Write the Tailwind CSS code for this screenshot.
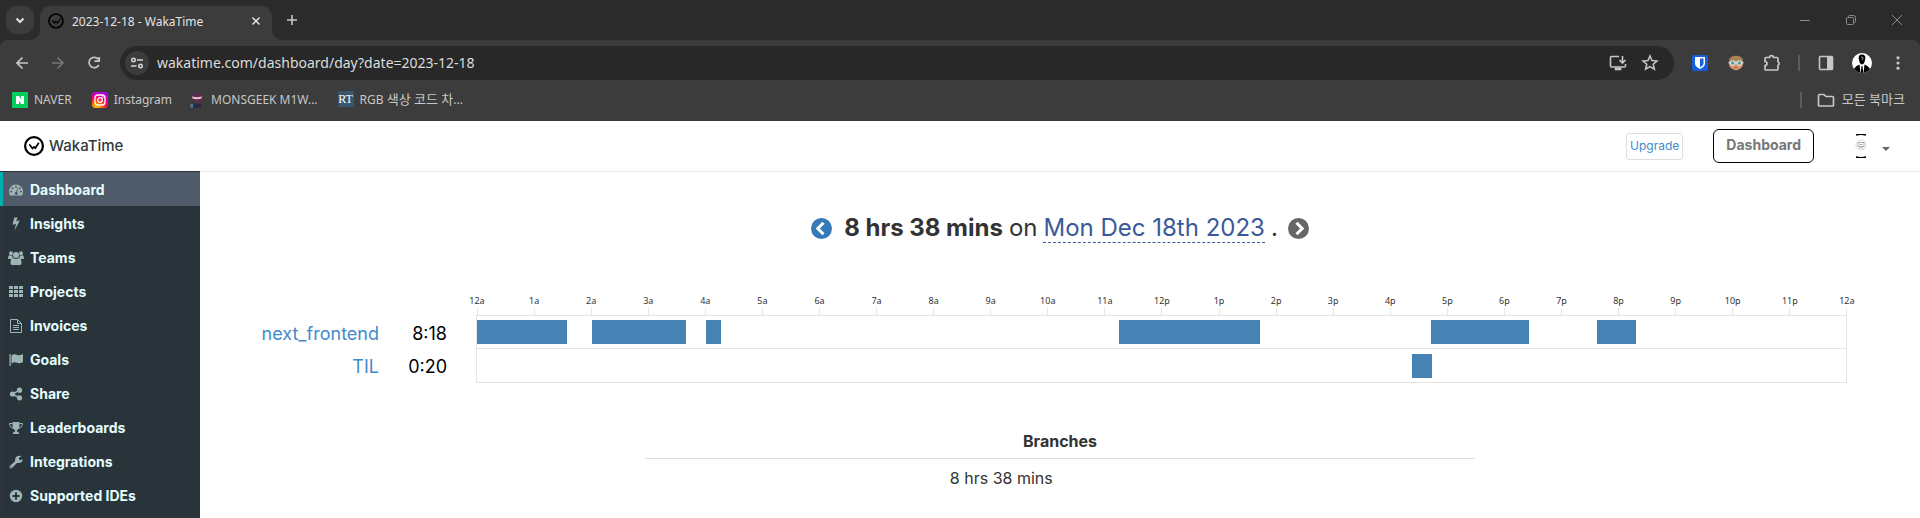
<!DOCTYPE html>
<html lang="en">
<head>
<meta charset="utf-8">
<title>2023-12-18 - WakaTime</title>
<script src="https://cdn.jsdelivr.net/npm/@tailwindcss/browser@4"></script>
</head>
<body class="flex h-screen flex-col overflow-hidden bg-white font-['Inter','Noto_Sans_CJK_KR',sans-serif] text-[#333]">

<!-- Browser window chrome -->
<div class="shrink-0 bg-[#2b2b2b] font-['Noto_Sans','Noto_Sans_CJK_KR',sans-serif] text-xs text-[#c7c7c7]">
  <div class="flex h-10 items-end pl-1.5">
    <button aria-label="Search tabs" class="mb-1.5 flex size-7 items-center justify-center rounded-[10px] bg-[#3c3c3c]">
      <svg class="size-4" viewBox="0 0 16 16" fill="none" stroke="#e3e3e3" stroke-width="2"><path d="M4.5 6.5 8 10l3.5-3.5"/></svg>
    </button>
    <svg class="ml-[-4px] size-2.5" viewBox="0 0 10 10"><path d="M10 0v10H0A10 10 0 0 0 10 0Z" fill="#3c3c3c"/></svg>
    <div class="flex h-[34px] w-[232px] items-center rounded-t-[10px] bg-[#3c3c3c] px-2 pb-1">
      <svg class="size-4" viewBox="0 0 16 16" fill="none" stroke="#000" stroke-width="1.700"><circle cx="8" cy="8" r="7"/><path d="m4.500 7.500 2 2.500L8 8.500 9.500 10l3-4.500" stroke-width="1.300"/></svg>
      <span class="ml-2 flex-1 whitespace-nowrap pt-0.5 text-[#e3e3e3]">2023-12-18 - WakaTime</span>
      <button aria-label="Close tab" class="flex size-4 items-center justify-center"><svg class="size-4" viewBox="0 0 16 16" stroke="#e3e3e3" stroke-width="1.500"><path d="m4.500 4.500 7 7m0-7-7 7"/></svg></button>
    </div>
    <svg class="size-2.5" viewBox="0 0 10 10"><path d="M0 0v10h10A10 10 0 0 1 0 0Z" fill="#3c3c3c"/></svg>
    <button aria-label="New tab" class="mb-3 ml-0.5 flex size-4 items-center justify-center"><svg class="size-4" viewBox="0 0 16 16" stroke="#c7c7c7" stroke-width="1.600"><path d="M8 3v10M3 8h10"/></svg></button>
    <div class="mb-3 ml-auto flex gap-[30px] pr-[15px]">
      <button aria-label="Minimize"><svg class="size-4" viewBox="0 0 16 16" stroke="#8a8a8a"><path d="M3 8.500h10"/></svg></button>
      <button aria-label="Restore"><svg class="size-4" viewBox="0 0 16 16" fill="none" stroke="#8a8a8a"><rect x="3.500" y="5.500" width="7" height="7" rx="1"/><path d="M5.500 5.500v-1q0-1 1-1h4q2 0 2 2v4q0 1-1 1h-1"/></svg></button>
      <button aria-label="Close"><svg class="size-4" viewBox="0 0 16 16" stroke="#8a8a8a"><path d="m3 3 10 10m0-10L3 13"/></svg></button>
    </div>
  </div>

  <div class="rounded-t-lg bg-[#3c3c3c]">
    <div class="flex h-[46px] items-center pl-3.5 pr-3.5">
      <div class="flex gap-4">
        <button aria-label="Back"><svg class="size-5" viewBox="0 0 20 20" fill="none" stroke="#c7c7c7" stroke-width="1.700"><path d="M14 10H3m5.500-5.500L3 10l5.500 5.500"/></svg></button>
        <button aria-label="Forward"><svg class="size-5" viewBox="0 0 20 20" fill="none" stroke="#757575" stroke-width="1.700"><path d="M2 10h11M7.500 4.500 13 10l-5.500 5.500"/></svg></button>
        <button aria-label="Reload"><svg class="size-5" viewBox="0 0 20 20" fill="none" stroke="#c7c7c7" stroke-width="1.700"><path d="M12.500 6.500A5.200 5.200 0 1 0 12.800 12"/><path d="M8.500 8.200h4.700V4"/></svg></button>
      </div>
      <div class="ml-[14px] flex h-[34px] flex-1 items-center rounded-full bg-[#282828] pl-[5px] pr-3.5">
        <button aria-label="View site information" class="flex size-6 items-center justify-center rounded-full bg-[#3c3c3c]">
          <svg class="size-4" viewBox="0 0 16 16" fill="none" stroke="#d5d5d5" stroke-width="1.600"><circle cx="4.500" cy="5" r="1.700"/><path d="M8 5h6M2 11h5.500"/><circle cx="11.500" cy="11" r="1.700"/></svg>
        </button>
        <input aria-label="Address" value="wakatime.com/dashboard/day?date=2023-12-18" class="ml-2 min-w-0 flex-1 bg-transparent text-sm text-[#dcdcdc] outline-none">
        <button aria-label="Install app"><svg class="size-5" viewBox="0 0 20 20" fill="none" stroke="#c7c7c7" stroke-width="1.600"><path d="M11 3.500H3.500q-1 0-1 1v8.500q0 1 1 1h13q1 0 1-1v-2M14.500 3v7m-3-3 3 3 3-3"/><path d="M7.500 15.500h5v1h-5z"/></svg></button>
        <button aria-label="Bookmark this tab" class="ml-3"><svg class="size-5" viewBox="0 0 20 20" fill="none" stroke="#c7c7c7" stroke-width="1.500"><path d="m10 3 2 4.600 5 .4-3.800 3.300 1.200 4.900-4.400-2.600-4.400 2.600 1.200-4.900L3 8l5-.4z"/></svg></button>
      </div>
      <div class="ml-[18px] flex items-center">
        <button aria-label="Bitwarden"><svg class="size-4" viewBox="0 0 16 16"><rect width="16" height="16" rx="2" fill="#175ddc"/><path d="M3 2h10v6.500q0 3-5 5.500-5-2.500-5-5.500z" fill="#fff"/><path d="M8 3.500h3.500v5q0 2-3.500 3.800z" fill="#175ddc"/></svg></button>
        <button aria-label="Face extension" class="ml-5"><svg class="size-4" viewBox="0 0 16 16"><circle cx="8" cy="8" r="7.200" fill="#d99a72"/><path d="M.8 7Q1 .8 8 .8T15.200 7Q8 4.500.8 7Z" fill="#a98452"/><path d="M.5 7h15v1.200H.5z" fill="#cfe0e2"/><circle cx="4.700" cy="8" r="2.200" fill="#4a98a6" stroke="#e8f0f0"/><circle cx="11.300" cy="8" r="2.200" fill="#4a98a6" stroke="#e8f0f0"/><path d="M6 13q2-1.500 4 0" stroke="#b5504a" fill="none"/></svg></button>
        <button aria-label="Extensions" class="ml-[18px]"><svg class="size-5" viewBox="0 0 20 20" fill="none" stroke="#c7c7c7" stroke-width="1.700"><path d="M4 4.500h3.500a2 1.800 0 0 1 4 0H15q1 0 1 1v3.200a1.600 1.900 0 0 1 0 3.600V16q0 1-1 1H4q-1 0-1-1v-3.500a2 2 0 0 0 0-4V5.500q0-1 1-1Z"/></svg></button>
        <span class="ml-4 h-4 w-0.5 bg-[#5c5c5c]"></span>
        <button aria-label="Side panel" class="ml-4"><svg class="size-5" viewBox="0 0 20 20"><rect x="3.500" y="3.500" width="13" height="13" rx="1" fill="none" stroke="#c7c7c7" stroke-width="1.600"/><path d="M11 3h5.500v14H11z" fill="#c7c7c7"/></svg></button>
        <button aria-label="Profile" class="ml-4"><svg class="size-5" viewBox="0 0 20 20"><clipPath id="p"><circle cx="10" cy="10" r="10"/></clipPath><g clip-path="url(#p)"><path d="M0 0h20v20H0z" fill="#fff"/><path d="M10 1.500c2.500 0 3.500 1.500 3.300 4L12.500 9q-1 2.500-2.500 2.500T7.500 9l-.8-3.500c-.2-2.500.8-4 3.300-4ZM1 20q0-6 6.500-8.500l1 8.500zm18 0q0-6-6.500-8.500l-1 8.500zM9.500 13h1l.8 7H8.700z" fill="#000"/><path d="M9 4.500q1.200-1 1.800 0T10 7" stroke="#ccc" stroke-width=".8" fill="none"/></g></svg></button>
        <button aria-label="Menu" class="ml-[18px]"><svg class="size-4" viewBox="0 0 16 16" fill="#c7c7c7"><circle cx="8" cy="2.800" r="1.600"/><circle cx="8" cy="8" r="1.600"/><circle cx="8" cy="13.200" r="1.600"/></svg></button>
      </div>
    </div>
    <div class="flex h-[35px] items-center pb-2 pl-3 pr-[15px]">
      <a href="#" class="flex items-center gap-1.5"><svg class="size-4" viewBox="0 0 16 16"><path d="M0 0h16v16H0z" fill="#03cf5d"/><path d="M4 4h3l2.200 3.500V4H12v8H9.200L7 8.500V12H4z" fill="#fff"/></svg>NAVER</a>
      <a href="#" class="ml-5 flex items-center gap-1.5"><svg class="size-4" viewBox="0 0 16 16" fill="none" stroke="#fff"><defs><radialGradient id="g" cx=".25" cy="1.050" r="1.150"><stop offset="0" stop-color="#ffd600"/><stop offset=".35" stop-color="#ff6a00"/><stop offset=".6" stop-color="#ff0069"/><stop offset="1" stop-color="#a800ff"/></radialGradient></defs><rect width="16" height="16" rx="3.500" fill="url(#g)" stroke="none"/><rect x="3" y="3" width="10" height="10" rx="3" stroke-width="1.300"/><circle cx="8" cy="8" r="2.300" stroke-width="1.300"/><circle cx="10.900" cy="5.100" r=".4"/></svg>Instagram</a>
      <a href="#" class="ml-[17px] flex items-center gap-1.5"><svg class="size-4" viewBox="0 0 16 16"><path d="M2.500 4Q3 1 8 1t5.500 3L12.500 9q-4 4-8 0z" fill="#5b2b52"/><path d="M3 4.500q5 1.600 10 0l-.6 2q-4.400 1.300-8.800 0z" fill="#f1c3c6"/><path d="M4.500 11q3.500 2 7 0l1 5H4z" fill="#2c2a38"/><path d="M1.500 12H4v3.500H1.500z" fill="#4979a8"/></svg>MONSGEEK M1W...</a>
      <a href="#" class="ml-5 flex items-center gap-1.5"><span class="flex size-4 items-center justify-center bg-[#35566e] font-['Liberation_Serif',serif] text-xs leading-4 text-white">RT</span><span>RGB <span class="text-[13px]">색상 코드 차</span>...</span></a>
      <span class="ml-auto h-4 w-0.5 bg-[#5c5c5c]"></span>
      <button class="ml-3.5 flex items-center gap-1.5 text-[13px]"><svg class="size-5" viewBox="0 0 20 20" fill="none" stroke="#c7c7c7" stroke-width="1.700"><path d="M3.500 4.500H8l2 2h6.500q1 0 1 1V15q0 1-1 1h-13q-1 0-1-1V5.500q0-1 1-1Z"/></svg>모든 북마크</button>
    </div>
  </div>
</div>

<!-- Site header -->
<header class="flex h-[51px] shrink-0 items-center border-b border-[#e7e7e7] pl-6 pr-[30px]">
  <a href="#" class="flex items-center gap-[5px] text-[15px] font-medium text-[#2f3a44]">
    <svg class="size-5" viewBox="0 0 20 20" fill="none" stroke="#000" stroke-linecap="round" stroke-linejoin="round"><circle cx="10" cy="10" r="8.900" stroke-width="2.200"/><path d="m5.800 9 2.700 3.500L10 10.800l1.200 1.500 3.300-5" stroke-width="1.700"/></svg>
    WakaTime
  </a>
  <button class="ml-auto h-[27px] rounded-[3px] border border-[#ddd] px-[3px] text-xs text-[#428bca]">Upgrade</button>
  <button class="ml-[30px] h-[34px] rounded-md border border-black px-3 pb-0.5 text-sm font-bold text-[#777]">Dashboard</button>
  <button aria-label="Account" class="ml-[38px] flex items-center gap-3">
    <svg class="h-6 w-[18px]" viewBox="0 0 18 24" fill="none"><path d="M4 1q5-1.500 10 0M4 23q5 1.500 10 0" stroke="#000" stroke-width="1.400"/><circle cx="9" cy="11" r="5" stroke="#ddd"/><path d="M6 8.500h6v4H6zM7.500 10.500h3M7 14h4" stroke="#999" stroke-width=".8"/></svg>
    <svg class="mt-1.5 h-1 w-2" viewBox="0 0 8 4" fill="#666"><path d="M0 0h8L4 4z"/></svg>
  </button>
</header>

<div class="flex min-h-0 flex-1">
  <!-- Sidebar -->
  <nav class="-mt-px w-[200px] shrink-0 bg-[#29343a] pt-px text-sm font-bold text-[#e4fdff]">
    <a href="#" class="flex h-[34px] items-center gap-1.5 border-l-[3px] border-[#00b0b0] bg-[#505b69] pl-[5px] pt-0.5"><svg class="size-4" viewBox="0 0 16 16"><path d="M8 2.500a7 7 0 0 0-7 7q0 2 1 4h12q1-2 1-4a7 7 0 0 0-7-7Z" fill="#9fb5b5"/><g fill="#505b69"><circle cx="8" cy="4.800" r="1"/><circle cx="4.600" cy="6.200" r="1"/><circle cx="3.200" cy="9.500" r="1"/><circle cx="12.800" cy="9.500" r="1"/><circle cx="11.600" cy="6.200" r="1"/><path d="m9.200 6 .8.200-.9 3.700a1.600 1.600 0 1 1-.8-.2z"/></g></svg>Dashboard</a>
    <a href="#" class="flex h-[34px] items-center gap-1.5 border-l-[3px] border-[#2c353d] pl-[5px] pt-0.5"><svg class="size-4" viewBox="0 0 16 16" fill="#9fb5b5"><path d="M6.300 1.500h3.300L8.200 5.300l3.600-.8L6.500 14.500 8 8l-3.500.8z"/></svg>Insights</a>
    <a href="#" class="flex h-[34px] items-center gap-1.5 border-l-[3px] border-[#2c353d] pl-[5px] pt-0.5"><svg class="size-4" viewBox="0 0 16 16" fill="#9fb5b5"><circle cx="3" cy="3.200" r="2"/><circle cx="13" cy="3.200" r="2"/><circle cx="8" cy="5" r="3"/><path d="M.2 9V7q.3-2 1.300-1.700 1.500.8 2.700 0Q4 7.500 5 8.200q-1.500.2-2 .8zM15.800 9V7q-.3-2-1.300-1.700-1.500.8-2.700 0 .2 2.200-.8 2.900 1.500.2 2 .8zM2.500 13q0-5 3-5 2.500 2 5 0 3 0 3 5 0 2-1.500 2H4q-1.500 0-1.500-2Z"/></svg>Teams</a>
    <a href="#" class="flex h-[34px] items-center gap-1.5 border-l-[3px] border-[#2c353d] pl-[5px] pt-0.5"><svg class="size-4" viewBox="0 0 16 16" fill="#9fb5b5"><path d="M1 2h4v3H1zm5 0h4v3H6zm5 0h4v3h-4zM1 6h4v3H1zm5 0h4v3H6zm5 0h4v3h-4zM1 10h4v3H1zm5 0h4v3H6zm5 0h4v3h-4z"/></svg>Projects</a>
    <a href="#" class="flex h-[34px] items-center gap-1.5 border-l-[3px] border-[#2c353d] pl-[5px] pt-0.5"><svg class="size-4" viewBox="0 0 16 16" fill="none" stroke="#9fb5b5"><path d="M2.500 1.500h7l4 4v9h-11zM9.500 1.500v4h4M5 7.500h6m-6 2h6m-6 2h6"/></svg>Invoices</a>
    <a href="#" class="flex h-[34px] items-center gap-1.5 border-l-[3px] border-[#2c353d] pl-[5px] pt-0.5"><svg class="size-4" viewBox="0 0 16 16" fill="#9fb5b5"><path d="M1.500 2h1.200v12H1.500zM3.500 3.500q3-2 5.500-.5 2.500 1 6-1v8q-3.500 2-6 .8-2.500-1.300-5.500.7z"/></svg>Goals</a>
    <a href="#" class="flex h-[34px] items-center gap-1.5 border-l-[3px] border-[#2c353d] pl-[5px] pt-0.5"><svg class="size-4" viewBox="0 0 16 16" fill="#9fb5b5"><circle cx="4.500" cy="8" r="2.600"/><circle cx="11.500" cy="4.200" r="2.600"/><circle cx="11.500" cy="11.800" r="2.600"/><path d="m11.500 4.200-7 3.800 7 3.800" fill="none" stroke="#9fb5b5" stroke-width="1.500"/></svg>Share</a>
    <a href="#" class="flex h-[34px] items-center gap-1.5 border-l-[3px] border-[#2c353d] pl-[5px] pt-0.5"><svg class="size-4" viewBox="0 0 16 16" fill="#9fb5b5"><path d="M4.500 2h7v3q0 4-2.500 5v1.500q2 .3 2.300 2.500H4.700Q5 11.800 7 11.500V10Q4.500 9 4.500 5z"/><path d="M4.500 3.500h-3q0 4 4.500 5M11.500 3.500h3q0 4-4.500 5" fill="none" stroke="#9fb5b5"/></svg>Leaderboards</a>
    <a href="#" class="flex h-[34px] items-center gap-1.5 border-l-[3px] border-[#2c353d] pl-[5px] pt-0.5"><svg class="size-4" viewBox="0 0 16 16" fill="#9fb5b5"><path d="M13.500 2.300 11 3.800v1.700l1.500.8 2-1.300q.3 3.800-3.800 4-.8 0-1.500-.3L4 14q-1.200 1-2.200 0t0-2L7.300 7Q6.500 5 8 3.200q2-2.200 5.500-.9ZM3 12.300a.6.600 0 1 0 .1 1.200.6.600 0 0 0-.1-1.200Z" fill-rule="evenodd"/></svg>Integrations</a>
    <a href="#" class="flex h-[34px] items-center gap-1.5 border-l-[3px] border-[#2c353d] pl-[5px] pt-0.5"><svg class="size-4" viewBox="0 0 16 16"><circle cx="8" cy="8" r="6.200" fill="#9fb5b5"/><path d="M8 4.500v7M4.500 8h7" stroke="#29343a" stroke-width="2"/></svg>Supported IDEs</a>
  </nav>

  <main class="min-w-0 flex-1 pt-10">
    <h1 class="flex h-8 items-center justify-center whitespace-nowrap text-2xl leading-7">
      <a href="#" aria-label="Previous day"><svg class="size-[21px]" viewBox="0 0 21 21"><circle cx="10.500" cy="10.500" r="10.500" fill="#337ab7"/><path d="m12.500 4.800-5.700 5.700 5.700 5.700" fill="none" stroke="#fff" stroke-width="3"/></svg></a>
      <strong class="ml-3 font-bold">8 hrs 38 mins</strong>
      <span class="ml-1.5">on</span>
      <a href="#" class="ml-1.5 border-b border-dashed border-[#3b5998] text-[#3b5998]">Mon Dec 18th 2023</a>
      <span class="ml-1.5">.</span>
      <a href="#" aria-label="Next day" class="ml-2.5"><svg class="size-[21px]" viewBox="0 0 21 21"><circle cx="10.500" cy="10.500" r="10.500" fill="#666"/><path d="m8.500 4.800 5.700 5.700-5.700 5.700" fill="none" stroke="#fff" stroke-width="3"/></svg></a>
    </h1>

    <!-- Daily timeline -->
    <section class="mt-[50px] pr-[73px]">
      <div class="ml-[277px] flex justify-between font-['Noto_Sans',sans-serif] text-[9px] leading-[14px] text-[#333]">
        <div class="flex w-0 flex-col items-center">12a<i class="h-[7px] w-px bg-[#e5e5e5]"></i></div>
        <div class="flex w-0 flex-col items-center">1a<i class="h-[7px] w-px bg-[#e5e5e5]"></i></div>
        <div class="flex w-0 flex-col items-center">2a<i class="h-[7px] w-px bg-[#e5e5e5]"></i></div>
        <div class="flex w-0 flex-col items-center">3a<i class="h-[7px] w-px bg-[#e5e5e5]"></i></div>
        <div class="flex w-0 flex-col items-center">4a<i class="h-[7px] w-px bg-[#e5e5e5]"></i></div>
        <div class="flex w-0 flex-col items-center">5a<i class="h-[7px] w-px bg-[#e5e5e5]"></i></div>
        <div class="flex w-0 flex-col items-center">6a<i class="h-[7px] w-px bg-[#e5e5e5]"></i></div>
        <div class="flex w-0 flex-col items-center">7a<i class="h-[7px] w-px bg-[#e5e5e5]"></i></div>
        <div class="flex w-0 flex-col items-center">8a<i class="h-[7px] w-px bg-[#e5e5e5]"></i></div>
        <div class="flex w-0 flex-col items-center">9a<i class="h-[7px] w-px bg-[#e5e5e5]"></i></div>
        <div class="flex w-0 flex-col items-center">10a<i class="h-[7px] w-px bg-[#e5e5e5]"></i></div>
        <div class="flex w-0 flex-col items-center">11a<i class="h-[7px] w-px bg-[#e5e5e5]"></i></div>
        <div class="flex w-0 flex-col items-center">12p<i class="h-[7px] w-px bg-[#e5e5e5]"></i></div>
        <div class="flex w-0 flex-col items-center">1p<i class="h-[7px] w-px bg-[#e5e5e5]"></i></div>
        <div class="flex w-0 flex-col items-center">2p<i class="h-[7px] w-px bg-[#e5e5e5]"></i></div>
        <div class="flex w-0 flex-col items-center">3p<i class="h-[7px] w-px bg-[#e5e5e5]"></i></div>
        <div class="flex w-0 flex-col items-center">4p<i class="h-[7px] w-px bg-[#e5e5e5]"></i></div>
        <div class="flex w-0 flex-col items-center">5p<i class="h-[7px] w-px bg-[#e5e5e5]"></i></div>
        <div class="flex w-0 flex-col items-center">6p<i class="h-[7px] w-px bg-[#e5e5e5]"></i></div>
        <div class="flex w-0 flex-col items-center">7p<i class="h-[7px] w-px bg-[#e5e5e5]"></i></div>
        <div class="flex w-0 flex-col items-center">8p<i class="h-[7px] w-px bg-[#e5e5e5]"></i></div>
        <div class="flex w-0 flex-col items-center">9p<i class="h-[7px] w-px bg-[#e5e5e5]"></i></div>
        <div class="flex w-0 flex-col items-center">10p<i class="h-[7px] w-px bg-[#e5e5e5]"></i></div>
        <div class="flex w-0 flex-col items-center">11p<i class="h-[7px] w-px bg-[#e5e5e5]"></i></div>
        <div class="flex w-0 flex-col items-center">12a<i class="h-[7px] w-px bg-[#e5e5e5]"></i></div>
      </div>
      <div class="flex">
        <a href="#" class="w-[179px] pt-[5px] text-right text-lg leading-7 text-[#428bca]">next_frontend</a>
        <span class="w-[68px] pt-[5px] text-right text-lg leading-7 text-black">8:18</span>
        <div class="ml-[29px] flex h-[33px] flex-1 border border-b-0 border-[#e5e5e5] pt-1">
          <i class="h-6 bg-[#4682b4]" style="width:6.600%"></i>
          <i class="h-6 bg-[#4682b4]" style="margin-left:1.800%;width:6.850%"></i>
          <i class="h-6 bg-[#4682b4]" style="margin-left:1.450%;width:1.150%"></i>
          <i class="h-6 bg-[#4682b4]" style="margin-left:29.080%;width:10.250%"></i>
          <i class="h-6 bg-[#4682b4]" style="margin-left:12.540%;width:7.110%"></i>
          <i class="h-6 bg-[#4682b4]" style="margin-left:5.020%;width:2.850%"></i>
        </div>
      </div>
      <div class="flex">
        <a href="#" class="w-[179px] pt-[5px] text-right text-lg leading-7 text-[#428bca]">TIL</a>
        <span class="w-[68px] pt-[5px] text-right text-lg leading-7 text-black">0:20</span>
        <div class="ml-[29px] flex h-[35px] flex-1 border border-[#e5e5e5] pt-[5px]">
          <i class="h-6 bg-[#4682b4]" style="margin-left:68.300%;width:1.430%"></i>
        </div>
      </div>
    </section>

    <!-- Branch totals -->
    <section class="mx-auto mt-10 w-1/2 px-[15px]">
      <table class="w-full table-fixed text-base leading-5">
        <colgroup><col class="w-[36%]"><col></colgroup>
        <thead><tr class="border-b border-[#ddd]"><th colspan="2" class="pb-[7px] pt-2 font-bold">Branches</th></tr></thead>
        <tbody><tr><td></td><td class="px-1.5 py-[9px]">8 hrs 38 mins</td></tr></tbody>
      </table>
    </section>
  </main>
</div>
</body>
</html>
